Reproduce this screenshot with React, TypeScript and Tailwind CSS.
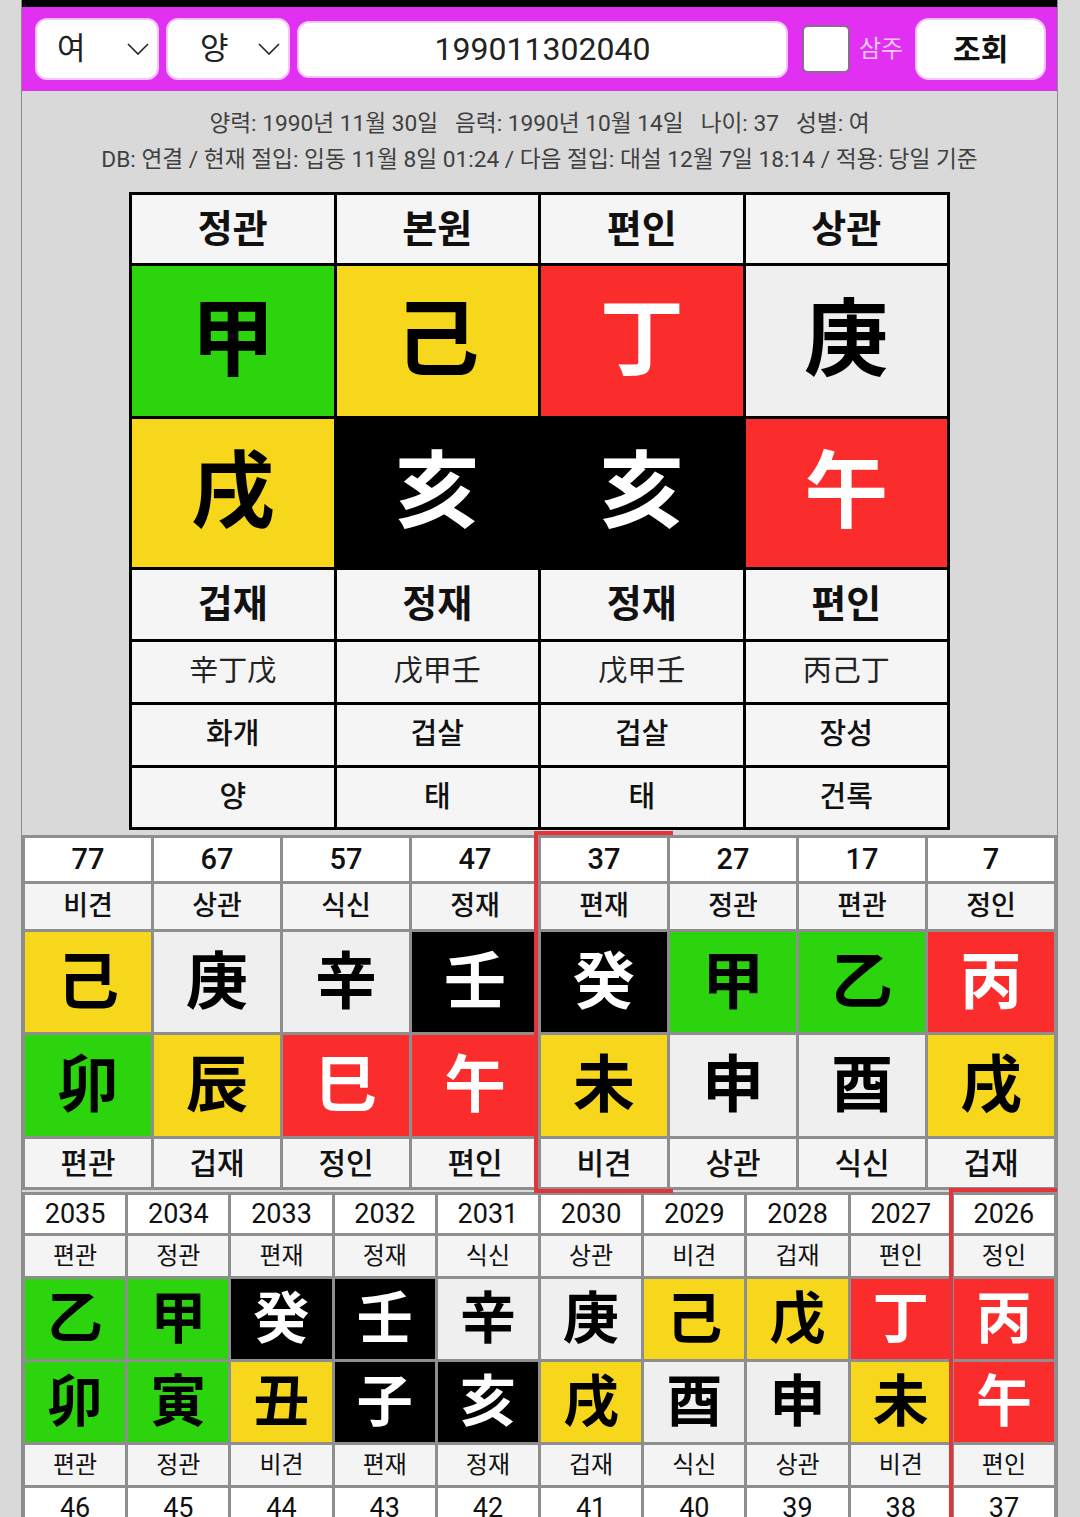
import React from 'react';

type Tone = 'green' | 'yellow' | 'red' | 'gray' | 'black';

const tone: Record<Tone, string> = {
  green: 'bg-[#2bd40c] text-black',
  yellow: 'bg-[#f6d71c] text-black',
  red: 'bg-[#fb2c2c] text-white',
  gray: 'bg-[#efefef] text-black',
  black: 'bg-black text-white',
};

interface Pillar {
  head: string;
  stem: string;
  st: Tone;
  branch: string;
  bt: Tone;
  god: string;
  hidden: string;
  sal: string;
  un: string;
}

const pillars: Pillar[] = [
  { head: '정관', stem: '甲', st: 'green', branch: '戌', bt: 'yellow', god: '겁재', hidden: '辛丁戊', sal: '화개', un: '양' },
  { head: '본원', stem: '己', st: 'yellow', branch: '亥', bt: 'black', god: '정재', hidden: '戊甲壬', sal: '겁살', un: '태' },
  { head: '편인', stem: '丁', st: 'red', branch: '亥', bt: 'black', god: '정재', hidden: '戊甲壬', sal: '겁살', un: '태' },
  { head: '상관', stem: '庚', st: 'gray', branch: '午', bt: 'red', god: '편인', hidden: '丙己丁', sal: '장성', un: '건록' },
];

interface Luck {
  label: string;
  top: string;
  stem: string;
  st: Tone;
  branch: string;
  bt: Tone;
  bottom: string;
  age?: string;
  active?: boolean;
}

const daeun: Luck[] = [
  { label: '77', top: '비견', stem: '己', st: 'yellow', branch: '卯', bt: 'green', bottom: '편관' },
  { label: '67', top: '상관', stem: '庚', st: 'gray', branch: '辰', bt: 'yellow', bottom: '겁재' },
  { label: '57', top: '식신', stem: '辛', st: 'gray', branch: '巳', bt: 'red', bottom: '정인' },
  { label: '47', top: '정재', stem: '壬', st: 'black', branch: '午', bt: 'red', bottom: '편인' },
  { label: '37', top: '편재', stem: '癸', st: 'black', branch: '未', bt: 'yellow', bottom: '비견', active: true },
  { label: '27', top: '정관', stem: '甲', st: 'green', branch: '申', bt: 'gray', bottom: '상관' },
  { label: '17', top: '편관', stem: '乙', st: 'green', branch: '酉', bt: 'gray', bottom: '식신' },
  { label: '7', top: '정인', stem: '丙', st: 'red', branch: '戌', bt: 'yellow', bottom: '겁재' },
];

const seun: Luck[] = [
  { label: '2035', top: '편관', stem: '乙', st: 'green', branch: '卯', bt: 'green', bottom: '편관', age: '46' },
  { label: '2034', top: '정관', stem: '甲', st: 'green', branch: '寅', bt: 'green', bottom: '정관', age: '45' },
  { label: '2033', top: '편재', stem: '癸', st: 'black', branch: '丑', bt: 'yellow', bottom: '비견', age: '44' },
  { label: '2032', top: '정재', stem: '壬', st: 'black', branch: '子', bt: 'black', bottom: '편재', age: '43' },
  { label: '2031', top: '식신', stem: '辛', st: 'gray', branch: '亥', bt: 'black', bottom: '정재', age: '42' },
  { label: '2030', top: '상관', stem: '庚', st: 'gray', branch: '戌', bt: 'yellow', bottom: '겁재', age: '41' },
  { label: '2029', top: '비견', stem: '己', st: 'yellow', branch: '酉', bt: 'gray', bottom: '식신', age: '40' },
  { label: '2028', top: '겁재', stem: '戊', st: 'yellow', branch: '申', bt: 'gray', bottom: '상관', age: '39' },
  { label: '2027', top: '편인', stem: '丁', st: 'red', branch: '未', bt: 'yellow', bottom: '비견', age: '38' },
  { label: '2026', top: '정인', stem: '丙', st: 'red', branch: '午', bt: 'red', bottom: '편인', age: '37', active: true },
];

function Chevron() {
  return (
    <svg width="22" height="12" viewBox="0 0 22 12" fill="none" stroke="#222" strokeWidth="1.6">
      <path d="M1 1l10 10L21 1" />
    </svg>
  );
}

const cell = 'flex items-center justify-center';

export default function App() {
  return (
    <div className="min-h-screen bg-[#d9d9d9] font-[Roboto,'Noto_Sans_CJK_KR',sans-serif]">
      <div className="ml-[21px] w-[1037px] border-x border-[#8a8a8a] bg-[#d9d9d9] pb-10">
        {/* Top bar */}
        <div className="flex h-[91px] items-center border-t-[7px] border-black bg-[#e130f2] pl-[13px]">
          <div className="flex h-[62px] w-[124px] items-center justify-between rounded-[12px] border-2 border-[#f3c6f7] bg-white pl-[20px] pr-[8px] text-[31px] text-[#222]">
            <span>여</span>
            <Chevron />
          </div>
          <div className="ml-[7px] flex h-[62px] w-[124px] items-center justify-between rounded-[12px] border-2 border-[#f3c6f7] bg-white pl-[32px] pr-[8px] text-[31px] text-[#222]">
            <span>양</span>
            <Chevron />
          </div>
          <div className="ml-[7px] flex h-[57px] w-[491px] items-center justify-center rounded-[12px] border-2 border-[#f3c6f7] bg-white text-[32px] text-[#222]">
            199011302040
          </div>
          <div className="ml-[14px] h-[48px] w-[48px] rounded-[6px] border-2 border-[#8d6b90] bg-white" />
          <span className="ml-[9px] text-[24px] text-[#f7c9f9]">삼주</span>
          <div className="ml-[12px] flex h-[62px] w-[131px] items-center justify-center rounded-[14px] border-2 border-[#f3c6f7] bg-white text-[30px] font-bold text-[#111]">
            조회
          </div>
        </div>

        {/* Info */}
        <div className="pb-[14px] pt-[15px] text-center text-[22.7px] leading-[36px] text-[#404040]">
          <div className="whitespace-pre">양력: 1990년 11월 30일   음력: 1990년 10월 14일   나이: 37   성별: 여</div>
          <div>DB: 연결 / 현재 절입: 입동 11월 8일 01:24 / 다음 절입: 대설 12월 7일 18:14 / 적용: 당일 기준</div>
        </div>

        {/* Natal chart */}
        <div className="mx-auto grid w-[821px] grid-cols-4 gap-[3px] bg-black p-[3px]">
          {pillars.map((p, i) => (
            <div key={'h' + i} className={`${cell} h-[68px] bg-[#f5f5f5] text-[38px] font-bold text-[#111]`}>{p.head}</div>
          ))}
          {pillars.map((p, i) => (
            <div key={'s' + i} className={`${cell} h-[150px] text-[84px] font-bold ${tone[p.st]}`}>{p.stem}</div>
          ))}
          {pillars.map((p, i) => (
            <div key={'b' + i} className={`${cell} h-[148px] text-[84px] font-bold ${tone[p.bt]}`}>{p.branch}</div>
          ))}
          {pillars.map((p, i) => (
            <div key={'g' + i} className={`${cell} h-[69px] bg-[#f5f5f5] text-[38px] font-bold text-[#111]`}>{p.god}</div>
          ))}
          {pillars.map((p, i) => (
            <div key={'x' + i} className={`${cell} h-[60px] bg-[#f5f5f5] text-[29px] text-[#222]`}>{p.hidden}</div>
          ))}
          {pillars.map((p, i) => (
            <div key={'l' + i} className={`${cell} h-[60px] bg-[#f5f5f5] text-[29px] font-medium text-[#111]`}>{p.sal}</div>
          ))}
          {pillars.map((p, i) => (
            <div key={'u' + i} className={`${cell} h-[59px] bg-[#f5f5f5] text-[29px] font-medium text-[#111]`}>{p.un}</div>
          ))}
        </div>

        {/* Daeun */}
        <div className="mt-[5px] flex gap-[3px] bg-[#8e8e8e] p-[3px]">
          {daeun.map((d, i) => (
            <div key={i} className="relative flex flex-1 flex-col gap-[3px]">
              <div className={`${cell} h-[43px] bg-white text-[29px] font-medium text-[#111]`}>{d.label}</div>
              <div className={`${cell} h-[45px] bg-[#f4f4f4] text-[27px] font-medium text-[#111]`}>{d.top}</div>
              <div className={`${cell} h-[100px] text-[62px] font-bold ${tone[d.st]}`}>{d.stem}</div>
              <div className={`${cell} h-[101px] text-[62px] font-bold ${tone[d.bt]}`}>{d.branch}</div>
              <div className={`${cell} h-[48px] bg-[#f4f4f4] text-[30px] font-medium text-[#111]`}>{d.bottom}</div>
              {d.active && (
                <div className="pointer-events-none absolute -bottom-[6px] -left-[7px] -right-[6px] -top-[7px] border-b-4 border-l-4 border-t-4 border-[#e3343c]" />
              )}
            </div>
          ))}
        </div>

        {/* Seun */}
        <div className="mt-[2px] flex gap-[3px] bg-[#8e8e8e] p-[3px]">
          {seun.map((d, i) => (
            <div key={i} className="relative flex flex-1 flex-col gap-[3px]">
              <div className={`${cell} h-[38px] bg-white text-[27px] text-[#111]`}>{d.label}</div>
              <div className={`${cell} h-[40px] bg-[#f4f4f4] text-[24px] text-[#111]`}>{d.top}</div>
              <div className={`${cell} h-[80px] text-[56px] font-bold ${tone[d.st]}`}>{d.stem}</div>
              <div className={`${cell} h-[80px] text-[56px] font-bold ${tone[d.bt]}`}>{d.branch}</div>
              <div className={`${cell} h-[40px] bg-[#f4f4f4] text-[24px] text-[#111]`}>{d.bottom}</div>
              <div className={`${cell} h-[40px] bg-white text-[27px] text-[#111]`}>{d.age}</div>
              {d.active && (
                <div className="pointer-events-none absolute -bottom-[10px] -left-[5px] -right-[3px] -top-[7px] border-l-4 border-t-4 border-[#e3343c]" />
              )}
            </div>
          ))}
        </div>
      </div>
    </div>
  );
}
